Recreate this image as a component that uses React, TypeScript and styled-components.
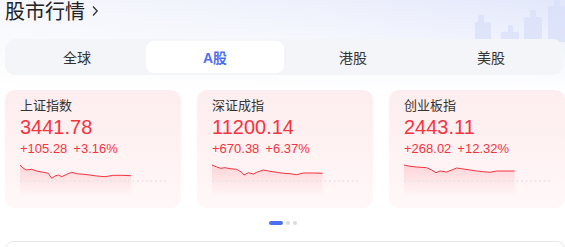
import { FC } from "react";
import styled, { createGlobalStyle } from "styled-components";

const GlobalStyle = createGlobalStyle`
  html, body {
    margin: 0;
    padding: 0;
    background: #ffffff;
  }
  * {
    box-sizing: border-box;
  }
`;

const RED = "#f5333f";
const BLUE = "#4e6ef2";

const Page = styled.div`
  position: relative;
  width: 565px;
  height: 247px;
  overflow: hidden;
  padding-left: 5px;
  font-family: "Liberation Sans", "Noto Sans CJK SC", sans-serif;
  background: linear-gradient(180deg, rgba(255, 255, 255, 0) 0, #ffffff 92px),
    linear-gradient(90deg, #f6f7fc 0, #eef1fc 55%, #e2e7fb 100%);
`;

const Decoration = styled.svg`
  position: absolute;
  top: 0;
  right: 0;
`;

const Header = styled.div`
  position: relative;
  display: flex;
  align-items: center;
  height: 22px;
  gap: 6px;
`;

const Title = styled.div`
  font-size: 20px;
  line-height: 22px;
  color: #222;
  font-family: "Noto Sans CJK SC", sans-serif;
`;

const TabBar = styled.div`
  position: relative;
  display: grid;
  grid-template-columns: repeat(4, 1fr);
  margin: 17px 2px 0 0;
  height: 36px;
  padding: 2px 3px;
  border-radius: 10px;
  background: #f4f5f9;
`;

const Tab = styled.div<{ $active?: boolean }>`
  display: flex;
  align-items: center;
  justify-content: center;
  border-radius: 8px;
  font-size: 14px;
  font-family: ${(p) =>
    p.$active
      ? `"Liberation Sans", "Noto Sans CJK SC", sans-serif`
      : `"Noto Sans CJK SC", sans-serif`};
  font-weight: ${(p) => (p.$active ? 700 : 400)};
  color: ${(p) => (p.$active ? BLUE : "#333")};
  background: ${(p) => (p.$active ? "#ffffff" : "transparent")};
`;

const CardRow = styled.div`
  display: flex;
  gap: 16px;
  margin-top: 15px;
`;

const Card = styled.div`
  flex: 0 0 176px;
  height: 118px;
  padding: 6px 15px 0;
  border-radius: 10px;
  background: linear-gradient(180deg, #fdedee 0, #fff4f5 70%, #fff8f8 100%);
`;

const CardTitle = styled.div`
  font-family: "Noto Sans CJK SC", sans-serif;
  font-size: 13px;
  line-height: 18px;
  color: #333;
`;

const Value = styled.div`
  margin-top: 1px;
  font-size: 20px;
  line-height: 24px;
  color: ${RED};
`;

const Change = styled.div`
  display: flex;
  gap: 6px;
  margin-top: 2px;
  font-size: 13px;
  line-height: 16px;
  color: ${RED};
`;

const Chart = styled.svg`
  display: block;
  margin-top: 7px;
`;

const Dots = styled.div`
  display: flex;
  justify-content: center;
  align-items: center;
  gap: 3px;
  margin-top: 13px;
  padding-right: 4px;
`;

const Dot = styled.span<{ $active?: boolean }>`
  display: block;
  width: ${(p) => (p.$active ? "14px" : "4px")};
  height: 4px;
  border-radius: 2px;
  background: ${(p) => (p.$active ? BLUE : "#dcdcdc")};
`;

const BottomCard = styled.div`
  margin-top: 16px;
  height: 40px;
  border: 1px solid #e8e8e8;
  border-radius: 8px;
`;

type Index = {
  name: string;
  value: string;
  diff: string;
  pct: string;
  points: number[][];
};

const indexes: Index[] = [
  {
    name: "上证指数",
    value: "3441.78",
    diff: "+105.28",
    pct: "+3.16%",
    points: [
      [60, 240], [70, 250], [80, 255], [95, 253], [110, 258], [130, 262],
      [145, 265], [155, 280], [165, 273], [175, 270], [185, 275], [200, 268],
      [215, 262], [230, 266], [250, 268], [270, 270], [290, 273], [315, 275],
      [340, 271], [365, 271], [393, 272],
    ],
  },
  {
    name: "深证成指",
    value: "11200.14",
    diff: "+670.38",
    pct: "+6.37%",
    points: [
      [66, 240], [80, 246], [92, 250], [105, 248], [120, 251], [140, 253],
      [155, 262], [162, 270], [175, 263], [190, 267], [200, 262], [220, 255],
      [240, 259], [260, 262], [280, 265], [300, 266], [320, 269], [340, 264],
      [370, 264], [398, 265],
    ],
  },
  {
    name: "创业板指",
    value: "2443.11",
    diff: "+268.02",
    pct: "+12.32%",
    points: [
      [72, 240], [90, 244], [110, 246], [140, 248], [155, 255], [168, 263],
      [180, 258], [200, 261], [215, 255], [230, 249], [250, 252], [270, 255],
      [290, 258], [310, 260], [330, 262], [350, 258], [375, 258], [404, 258],
    ],
  },
];

const MiniChart: FC<{ points: number[][] }> = ({ points }) => {
  const [x0, y0] = points[0];
  const pts = points.map(([x, y]) => [(x - x0) / 3, (y - y0) / 3 + 1]);
  const line = pts.map(([x, y]) => `${x.toFixed(1)},${y.toFixed(1)}`).join(" ");
  const lastX = pts[pts.length - 1][0];
  const area = `0,32 ${line} ${lastX.toFixed(1)},32`;
  return (
    <Chart width="146" height="32" viewBox="0 0 146 32">
      <defs>
        <linearGradient id="fade" x1="0" y1="0" x2="0" y2="1">
          <stop offset="0" stopColor="#f5333f" stopOpacity="0.16" />
          <stop offset="1" stopColor="#f5333f" stopOpacity="0" />
        </linearGradient>
      </defs>
      <polygon points={area} fill="url(#fade)" />
      <line
        x1="0"
        y1="17"
        x2="146"
        y2="17"
        stroke="#e6e3e6"
        strokeWidth="1.5"
        strokeDasharray="2 2.5"
      />
      <polyline
        points={line}
        fill="none"
        stroke="#f5333f"
        strokeWidth="1"
        strokeLinejoin="round"
      />
    </Chart>
  );
};

const tabs = ["全球", "A股", "港股", "美股"];

export default function App() {
  return (
    <>
      <GlobalStyle />
      <Page>
        <Decoration width="90" height="42" viewBox="0 0 90 42">
          <g fill="#dbe1fa" opacity="0.8">
            <rect x="3" y="15" width="6" height="10" rx="1.5" />
            <rect x="-2" y="22" width="18" height="20" rx="2" />
            <rect x="33" y="25" width="5" height="10" rx="1.5" />
            <rect x="26" y="32" width="18" height="10" rx="2" />
            <rect x="55" y="10" width="6" height="10" rx="1.5" />
            <rect x="49" y="17" width="18" height="25" rx="2" />
            <rect x="79" y="0" width="6" height="10" rx="1.5" />
            <rect x="73" y="6" width="18" height="36" rx="2" />
          </g>
        </Decoration>
        <Header>
          <Title>股市行情</Title>
          <svg width="8" height="12" viewBox="0 0 8 12">
            <path
              d="M2 1.5 L6.2 6 L2 10.5"
              fill="none"
              stroke="#333"
              strokeWidth="1.3"
            />
          </svg>
        </Header>
        <TabBar>
          {tabs.map((t) => (
            <Tab key={t} $active={t === "A股"}>
              {t}
            </Tab>
          ))}
        </TabBar>
        <CardRow>
          {indexes.map((i) => (
            <Card key={i.name}>
              <CardTitle>{i.name}</CardTitle>
              <Value>{i.value}</Value>
              <Change>
                <span>{i.diff}</span>
                <span>{i.pct}</span>
              </Change>
              <MiniChart points={i.points} />
            </Card>
          ))}
        </CardRow>
        <Dots>
          <Dot $active />
          <Dot />
          <Dot />
        </Dots>
        <BottomCard />
      </Page>
    </>
  );
}
